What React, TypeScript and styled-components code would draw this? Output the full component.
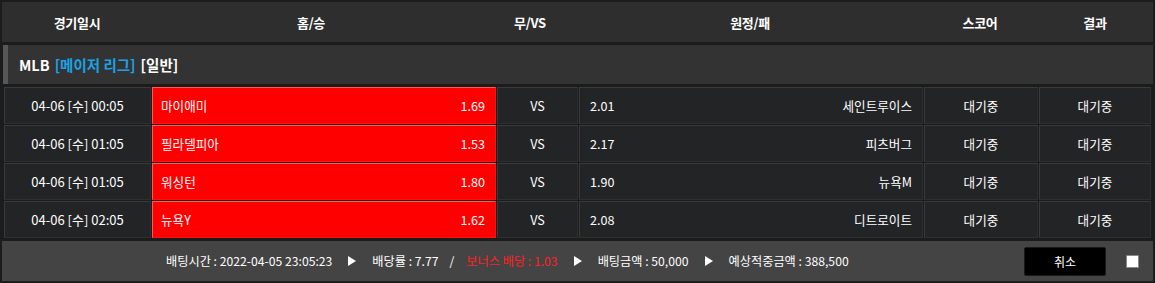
import React from 'react';
import styled, { createGlobalStyle } from 'styled-components';

const GlobalStyle = createGlobalStyle`
  html, body {
    margin: 0;
    padding: 0;
    background: #1c1c1c;
  }
  body {
    font-family: 'Noto Sans CJK KR', 'Noto Sans', sans-serif;
    color: #fff;
  }
`;

const StyledBoard = styled.div`
  width: 1155px;
  height: 283px;
  box-sizing: border-box;
  padding: 2px 2px 0 2px;
  background: #1c1c1c;
  overflow: hidden;
`;

const StyledHeader = styled.div`
  display: grid;
  grid-template-columns: 150px 318px 120px 320px 140px 90px 1fr;
  height: 40px;
  align-items: center;
  background: #2e2e2e;
  font-size: 13px;
  font-weight: 700;
  letter-spacing: -0.3px;
`;

const StyledHeadCell = styled.div`
  text-align: center;
`;

const StyledLeague = styled.div`
  display: flex;
  align-items: center;
  gap: 5px;
  height: 39px;
  margin: 3px 0 0 1px;
  padding-left: 11px;
  background: #333333;
  border-left: 5px solid #575757;
  font-size: 14.5px;
  font-weight: 700;
`;

const StyledLeagueName = styled.span<{ $accent?: boolean }>`
  color: ${(props) => (props.$accent ? '#1ba3e6' : '#ffffff')};
`;

const StyledRows = styled.div`
  display: flex;
  flex-direction: column;
  gap: 1px;
  margin: 3px 0 0 2px;
`;

const StyledRow = styled.div`
  display: grid;
  grid-template-columns: 147px 344px 81px 344px 114px 112px;
  column-gap: 1px;
  height: 37px;
  font-size: 12.6px;
`;

const StyledCell = styled.div<{ $wide?: boolean }>`
  display: flex;
  align-items: center;
  justify-content: center;
  box-sizing: border-box;
  background: #232426;
  border: 1px solid #393a3b;
  border-right-color: #2e2f30;
  border-bottom-color: #2e2f30;
  font-size: ${(props) => (props.$wide ? '13px' : 'inherit')};
`;

const StyledOddsCell = styled.div<{ $picked?: boolean; $reverse?: boolean }>`
  display: flex;
  align-items: center;
  justify-content: space-between;
  flex-direction: ${(props) => (props.$reverse ? 'row-reverse' : 'row')};
  box-sizing: border-box;
  padding: 0 10px 0 ${(props) => (props.$reverse ? '10px' : '8px')};
  background: ${(props) => (props.$picked ? '#ff0000' : '#232426')};
  border: 1px solid ${(props) => (props.$picked ? '#ff5a5a' : '#393a3b')};
  border-right-color: ${(props) => (props.$picked ? '#ff1010' : '#2e2f30')};
  border-bottom-color: ${(props) => (props.$picked ? '#ff1010' : '#2e2f30')};
`;

const StyledFooter = styled.div`
  display: flex;
  align-items: center;
  height: 40px;
  margin-top: 3px;
  padding-left: 164px;
  background: #444444;
  font-size: 12.2px;
`;

const StyledSummary = styled.div`
  display: flex;
  align-items: center;
  gap: 6px;
  flex: 1;
  white-space: nowrap;
`;

const StyledItem = styled.span<{ $bonus?: boolean }>`
  color: ${(props) => (props.$bonus ? '#ff2222' : '#ffffff')};
`;

const StyledArrow = styled.span`
  display: inline-block;
  width: 0;
  height: 0;
  margin: 0 10px 0 10px;
  border-top: 5px solid transparent;
  border-bottom: 5px solid transparent;
  border-left: 8px solid #ffffff;
`;

const StyledSlash = styled.span`
  margin: 0 6px 0 5px;
`;

const StyledCancelButton = styled.button`
  width: 82px;
  height: 29px;
  margin-right: 20px;
  background: #000000;
  border: 1px solid #1a1a1a;
  border-radius: 2px;
  color: #ffffff;
  font-family: inherit;
  font-size: 12px;
  cursor: pointer;
`;

const StyledCheck = styled.span`
  width: 11px;
  height: 11px;
  margin-right: 14px;
  background: #ffffff;
  border: 1px solid #8a8a8a;
  border-radius: 1px;
`;

const games = [
  { time: '04-06 [수] 00:05', home: '마이애미', homeOdds: '1.69', away: '세인트루이스', awayOdds: '2.01' },
  { time: '04-06 [수] 01:05', home: '필라델피아', homeOdds: '1.53', away: '피츠버그', awayOdds: '2.17' },
  { time: '04-06 [수] 01:05', home: '워싱턴', homeOdds: '1.80', away: '뉴욕M', awayOdds: '1.90' },
  { time: '04-06 [수] 02:05', home: '뉴욕Y', homeOdds: '1.62', away: '디트로이트', awayOdds: '2.08' },
];

const App = () => {
  return (
    <StyledBoard>
      <GlobalStyle />
      <StyledHeader>
        <StyledHeadCell>경기일시</StyledHeadCell>
        <StyledHeadCell>홈/승</StyledHeadCell>
        <StyledHeadCell>무/VS</StyledHeadCell>
        <StyledHeadCell>원정/패</StyledHeadCell>
        <StyledHeadCell>스코어</StyledHeadCell>
        <StyledHeadCell>결과</StyledHeadCell>
      </StyledHeader>

      <StyledLeague>
        <StyledLeagueName>MLB</StyledLeagueName>
        <StyledLeagueName $accent>[메이저 리그]</StyledLeagueName>
        <StyledLeagueName>[일반]</StyledLeagueName>
      </StyledLeague>

      <StyledRows>
        {games.map((game, i) => (
          <StyledRow key={i}>
            <StyledCell $wide>{game.time}</StyledCell>
            <StyledOddsCell $picked>
              <span>{game.home}</span>
              <span>{game.homeOdds}</span>
            </StyledOddsCell>
            <StyledCell>VS</StyledCell>
            <StyledOddsCell $reverse>
              <span>{game.away}</span>
              <span>{game.awayOdds}</span>
            </StyledOddsCell>
            <StyledCell>대기중</StyledCell>
            <StyledCell>대기중</StyledCell>
          </StyledRow>
        ))}
      </StyledRows>

      <StyledFooter>
        <StyledSummary>
          <StyledItem>배팅시간 : 2022-04-05 23:05:23</StyledItem>
          <StyledArrow />
          <StyledItem>배당률 : 7.77</StyledItem>
          <StyledSlash>/</StyledSlash>
          <StyledItem $bonus>보너스 배당 : 1.03</StyledItem>
          <StyledArrow />
          <StyledItem>배팅금액 : 50,000</StyledItem>
          <StyledArrow />
          <StyledItem>예상적중금액 : 388,500</StyledItem>
        </StyledSummary>
        <StyledCancelButton>취소</StyledCancelButton>
        <StyledCheck />
      </StyledFooter>
    </StyledBoard>
  );
};

export default App;
